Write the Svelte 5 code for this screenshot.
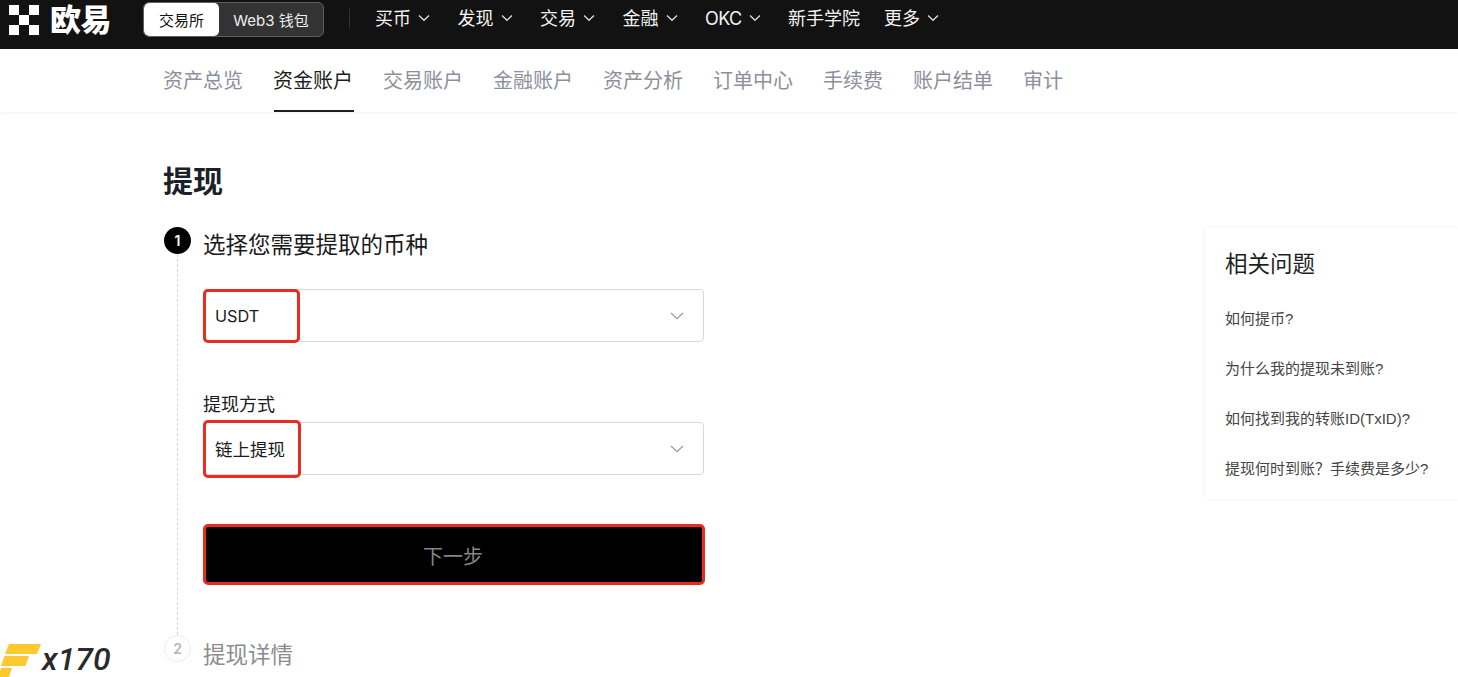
<script>
  const menu = [
    { label: '买币', caret: true },
    { label: '发现', caret: true },
    { label: '交易', caret: true },
    { label: '金融', caret: true },
    { label: 'OKC', caret: true },
    { label: '新手学院', caret: false },
    { label: '更多', caret: true }
  ];
  const tabs = ['资产总览', '资金账户', '交易账户', '金融账户', '资产分析', '订单中心', '手续费', '账户结单', '审计'];
  const faqs = ['如何提币?', '为什么我的提现未到账?', '如何找到我的转账ID(TxID)?', '提现何时到账\uFF1F手续费是多少?'];
</script>

<div class="page">
  <header class="topbar">
    <div class="logo">
      <svg class="mark" viewBox="0 0 30 30" width="30" height="30" aria-hidden="true">
        <rect x="0" y="0" width="10" height="10" fill="#fff" />
        <rect x="20" y="0" width="10" height="10" fill="#fff" />
        <rect x="10" y="10" width="10" height="10" fill="#fff" />
        <rect x="0" y="20" width="10" height="10" fill="#fff" />
        <rect x="20" y="20" width="10" height="10" fill="#fff" />
      </svg>
      <span class="brand">欧易</span>
    </div>
    <div class="switch">
      <span class="seg on">交易所</span>
      <span class="seg">Web3 钱包</span>
    </div>
    <span class="divider"></span>
    <nav class="menu">
      {#each menu as m}
        <span class="menu-item" class:plain={!m.caret} class:latin={m.label === 'OKC'}>
          {m.label}
          {#if m.caret}
            <svg viewBox="0 0 12 8" width="12" height="8" aria-hidden="true"><path d="M1 1.5 6 6.2 11 1.5" fill="none" stroke="#d8d8d8" stroke-width="1.4" /></svg>
          {/if}
        </span>
      {/each}
    </nav>
  </header>

  <nav class="tabs">
    {#each tabs as t, i}
      <span class="tab" class:active={i === 1}>{t}</span>
    {/each}
  </nav>

  <main class="content">
    <section class="left">
      <h1>提现</h1>

      <div class="step-head">
        <span class="num">1</span>
        <h2>选择您需要提取的币种</h2>
      </div>

      <div class="step-body">
        <div class="select first">
          <span class="value">USDT</span>
          <svg viewBox="0 0 14 8" width="14" height="8" aria-hidden="true"><path d="M1 1 7 6.6 13 1" fill="none" stroke="#9a9a9a" stroke-width="1.2" /></svg>
          <span class="mark-box usdt"></span>
        </div>

        <div class="label">提现方式</div>
        <div class="select">
          <span class="value">链上提现</span>
          <svg viewBox="0 0 14 8" width="14" height="8" aria-hidden="true"><path d="M1 1 7 6.6 13 1" fill="none" stroke="#9a9a9a" stroke-width="1.2" /></svg>
          <span class="mark-box chain"></span>
        </div>

        <button class="next" type="button">下一步</button>
      </div>

      <div class="step-head second">
        <span class="num off">2</span>
        <h2 class="off">提现详情</h2>
      </div>
    </section>

    <aside class="faq">
      <h3>相关问题</h3>
      <ul>
        {#each faqs as q}
          <li>{q}</li>
        {/each}
      </ul>
    </aside>
  </main>

  <div class="watermark">
    <svg viewBox="0 0 42 33" width="42" height="33" aria-hidden="true">
      <polygon points="9,0 41,0 37,10 5,10" fill="#fcc92f" />
      <polygon points="4.5,12 29,12 25.5,22 1,22" fill="#fcc92f" />
      <polygon points="1,24 12,24 9,33 0,33 0,27" fill="#fcc92f" />
    </svg>
    <span class="wm-text">x170</span>
  </div>
</div>

<style>
  :global(body) {
    margin: 0;
    background: #fff;
  }
  .page {
    position: relative;
    width: 1458px;
    height: 677px;
    overflow: hidden;
    font-family: "Inter", "Noto Sans CJK SC", sans-serif;
    color: #1a1a1a;
  }
  .topbar {
    height: 49px;
    background: #121212;
    display: flex;
    align-items: flex-start;
    box-sizing: border-box;
    padding-left: 9px;
    color: #fff;
  }
  .logo {
    display: flex;
    align-items: center;
    gap: 11px;
    width: 134px;
    height: 40px;
  }
  .mark {
    display: block;
  }
  .brand {
    font-size: 31px;
    line-height: 36px;
    font-weight: 900;
    letter-spacing: -0.5px;
  }
  .switch {
    display: flex;
    width: 181px;
    height: 35px;
    margin-top: 2px;
    box-sizing: border-box;
    border: 1px solid #5f5f5f;
    border-radius: 6px;
    background: #333;
    overflow: hidden;
    font-size: 15px;
  }
  .seg {
    display: flex;
    align-items: center;
    justify-content: center;
    flex: 1;
    color: #eee;
  }
  .seg.on {
    flex: 0 0 75px;
    background: #fff;
    color: #111;
    border-radius: 5px;
  }
  .divider {
    width: 1px;
    height: 20px;
    margin: 9px 0 0 25px;
    background: #333;
  }
  .menu {
    display: flex;
    margin-left: 25px;
    height: 38px;
    align-items: center;
  }
  .menu-item {
    display: flex;
    align-items: center;
    gap: 7px;
    font-size: 18px;
    line-height: 24px;
    margin-right: 27.5px;
    color: #f2f2f2;
    white-space: nowrap;
  }
  .menu-item.latin {
    letter-spacing: -0.6px;
  }
  .menu-item.plain {
    margin-right: 24px;
  }
  .menu-item svg {
    display: block;
    margin-top: -2px;
  }
  .tabs {
    height: 63px;
    box-sizing: border-box;
    padding-left: 163px;
    display: flex;
    gap: 30px;
    box-shadow: 0 1px 3px rgba(0, 0, 0, 0.06);
  }
  .tab {
    position: relative;
    font-size: 20px;
    line-height: 65px;
    height: 63px;
    color: #8c909a;
    white-space: nowrap;
  }
  .tab.active {
    color: #1d1d23;
  }
  .tab.active::after {
    content: "";
    position: absolute;
    left: 1px;
    right: -1px;
    bottom: 0;
    height: 2px;
    background: #1d1d23;
  }
  .content {
    display: flex;
    justify-content: space-between;
    padding-left: 163px;
  }
  .left {
    width: 545px;
  }
  h1 {
    margin: 49px 0 0;
    font-size: 30px;
    line-height: 40px;
    font-weight: 700;
    color: #1b1f27;
  }
  .step-head {
    display: flex;
    align-items: center;
    gap: 12px;
    height: 27px;
    margin: 26px 0 0 1px;
  }
  .step-head.second {
    margin-top: 0;
  }
  .num {
    flex: none;
    width: 27px;
    height: 27px;
    border-radius: 50%;
    background: #000;
    color: #fff;
    display: flex;
    align-items: center;
    justify-content: center;
    font-size: 14px;
    font-weight: 600;
  }
  .num.off {
    background: #fff;
    color: #b5b5b5;
    box-sizing: border-box;
    border: 1px solid #ececec;
  }
  h2 {
    margin: 7px 0 0;
    font-size: 22.5px;
    line-height: 27px;
    font-weight: 400;
    white-space: nowrap;
    color: #1a1a1a;
  }
  h2.off {
    color: #8c8c8c;
    margin-top: 11px;
  }
  .step-body {
    margin-left: 14px;
    border-left: 1px dashed #d8d8d8;
    padding: 35px 0 50px 25px;
    height: 381px;
    box-sizing: border-box;
  }
  .select {
    position: relative;
    display: flex;
    align-items: center;
    justify-content: space-between;
    width: 501px;
    height: 53px;
    box-sizing: border-box;
    border: 1px solid #d9d9d9;
    border-radius: 4px;
    padding: 0 19px 0 11px;
    font-size: 17.5px;
  }
  .value {
    line-height: 24px;
    margin-top: 3px;
  }
  .select.first .value {
    font-size: 16.3px;
    margin-top: 0;
  }
  .select svg {
    display: block;
  }
  .label {
    font-size: 18px;
    line-height: 24px;
    margin-top: 51px;
    margin-bottom: 5px;
  }
  .mark-box {
    position: absolute;
    top: -1px;
    left: -1px;
    box-sizing: border-box;
    border: 3px solid #e92b22;
    border-radius: 5px;
    height: 54px;
    background: transparent;
  }
  .mark-box.usdt {
    width: 97px;
  }
  .mark-box.chain {
    top: -3px;
    height: 58px;
    width: 98px;
  }
  .next {
    display: block;
    width: 502px;
    height: 61px;
    margin-top: 49px;
    background: #000;
    color: #868686;
    border: 3px solid #e92b22;
    border-radius: 5px;
    font-family: inherit;
    font-size: 20px;
    padding: 1px 2px 0 0;
  }
  .faq {
    width: 253px;
    height: 271px;
    margin-top: 116px;
    box-sizing: border-box;
    padding: 16px 0 0 20px;
    box-shadow: 0 0 4px rgba(0, 0, 0, 0.07);
    border-radius: 2px;
  }
  h3 {
    margin: 0;
    font-size: 22.5px;
    line-height: 40px;
    font-weight: 400;
    color: #1f1f1f;
  }
  ul {
    list-style: none;
    margin: 23px 0 0;
    padding: 0;
    display: flex;
    flex-direction: column;
    gap: 26px;
  }
  li {
    font-family: "Liberation Sans", "Noto Sans CJK SC", sans-serif;
    font-size: 15px;
    line-height: 24px;
    color: #444;
    white-space: nowrap;
  }
  .watermark {
    position: absolute;
    left: 0;
    bottom: 0;
    display: flex;
    align-items: flex-start;
    height: 33px;
  }
  .watermark svg {
    display: block;
  }
  .wm-text {
    font-family: "Roboto", sans-serif;
    font-style: italic;
    font-weight: 500;
    font-size: 32px;
    line-height: 30px;
    color: #2a2a2a;
    white-space: nowrap;
  }
</style>
